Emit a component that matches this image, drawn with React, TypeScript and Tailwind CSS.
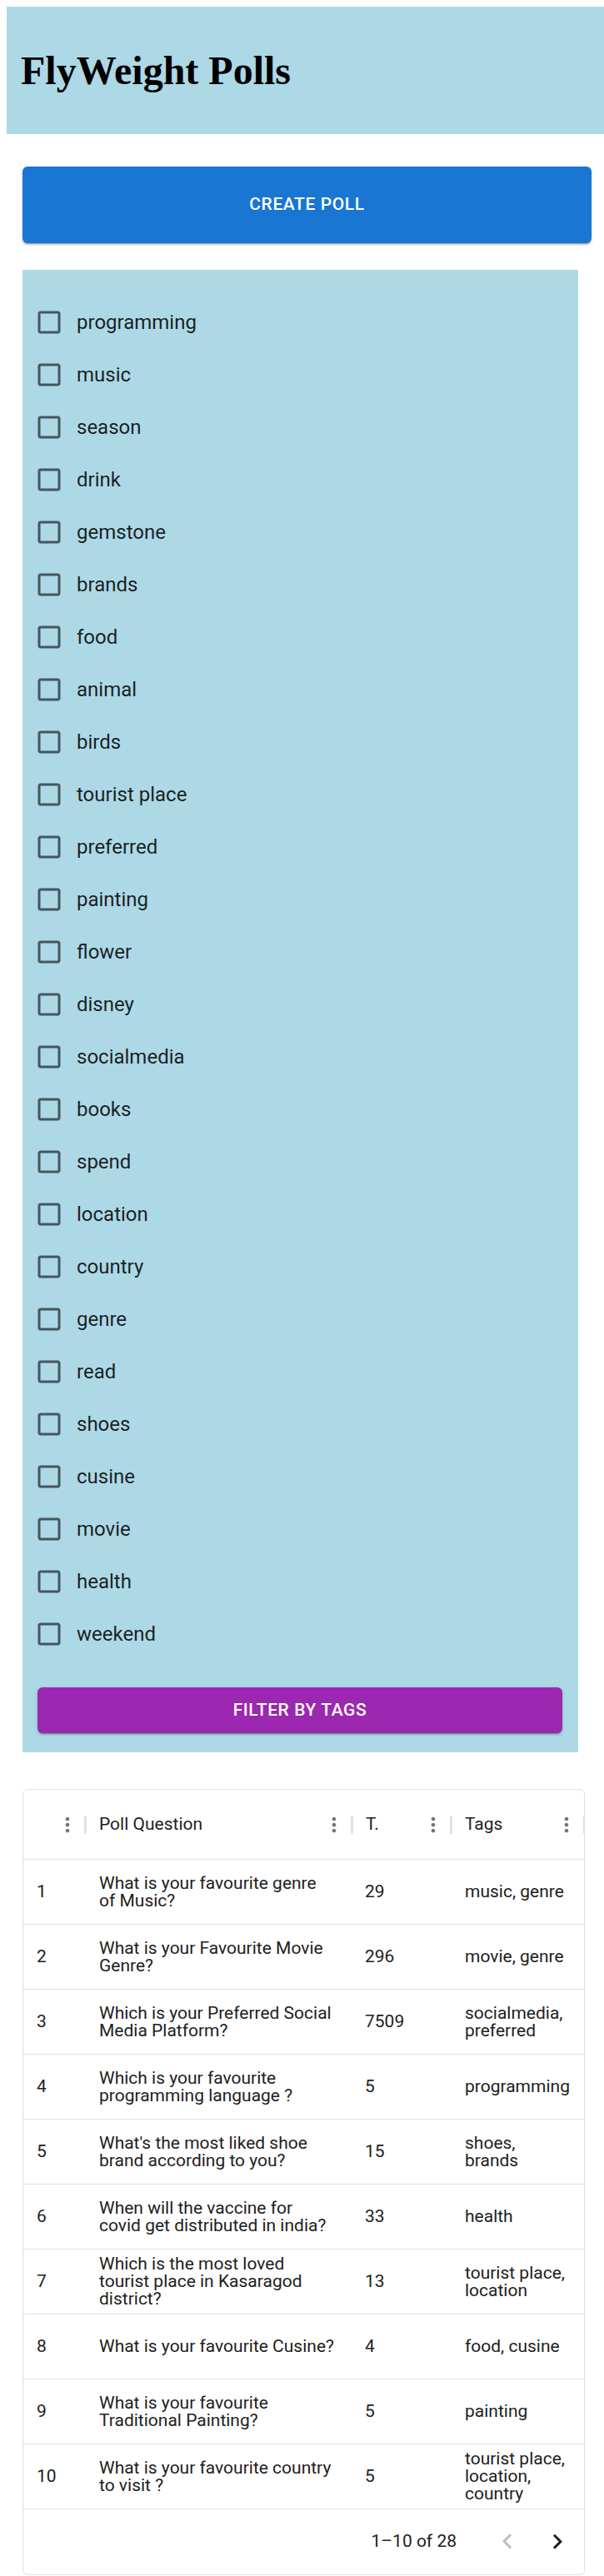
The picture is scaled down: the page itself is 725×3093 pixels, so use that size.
import React from 'react';

const tags = [
  'programming', 'music', 'season', 'drink', 'gemstone', 'brands', 'food', 'animal', 'birds',
  'tourist place', 'preferred', 'painting', 'flower', 'disney', 'socialmedia', 'books', 'spend',
  'location', 'country', 'genre', 'read', 'shoes', 'cusine', 'movie', 'health', 'weekend',
];

const polls = [
  { id: 1, q: 'What is your favourite genre of\u00a0Music?', t: 29, tags: 'music, genre' },
  { id: 2, q: 'What is your Favourite Movie Genre?', t: 296, tags: 'movie, genre' },
  { id: 3, q: 'Which is your Preferred Social Media Platform?', t: 7509, tags: 'socialmedia, preferred' },
  { id: 4, q: 'Which is your favourite programming language ?', t: 5, tags: 'programming' },
  { id: 5, q: "What's the most liked shoe brand according to you?", t: 15, tags: 'shoes, brands' },
  { id: 6, q: 'When will the vaccine for covid get distributed in india?', t: 33, tags: 'health' },
  { id: 7, q: 'Which is the most loved tourist place in Kasaragod district?', t: 13, tags: 'tourist place, location' },
  { id: 8, q: 'What is your favourite Cusine?', t: 4, tags: 'food, cusine' },
  { id: 9, q: 'What is your favourite Traditional Painting?', t: 5, tags: 'painting' },
  { id: 10, q: 'What is your favourite country to visit ?', t: 5, tags: 'tourist place, location, country' },
];

const MoreVert = () => (
  <svg viewBox="0 0 24 24" className="w-[28px] h-[28px] shrink-0 fill-[#757575]">
    <path d="M12 8c1.1 0 2-.9 2-2s-.9-2-2-2-2 .9-2 2 .9 2 2 2zm0 2c-1.1 0-2 .9-2 2s.9 2 2 2 2-.9 2-2-.9-2-2-2zm0 6c-1.1 0-2 .9-2 2s.9 2 2 2 2-.9 2-2-.9-2-2-2z" />
  </svg>
);

// column header: title, menu dots, then the resize separator on the column edge
const HeaderCell = ({ title, width }: { title: string; width: string }) => (
  <div className={`${width} h-full flex items-center shrink-0`}>
    <div className="flex-1 pl-[16px] truncate">{title}</div>
    <MoreVert />
    <div className="ml-[6px] mr-[-1px] w-[3px] h-[22px] bg-[#e0e0e0] rounded-sm shrink-0" />
  </div>
);

export default function App() {
  return (
    <div className="bg-white text-[#212121]" style={{ fontFamily: 'Roboto, "Noto Sans", sans-serif' }}>
      <header className="ml-2 mt-2 h-[153px] bg-[#add8e6] flex items-center pl-[17px]">
        <h1 className="text-[48px] font-bold text-black" style={{ fontFamily: '"Liberation Serif", "Times New Roman", serif' }}>
          FlyWeight Polls
        </h1>
      </header>

      <div className="ml-[27px]">
        <button className="mt-[39px] w-[683px] h-[92px] rounded-[6px] bg-[#1976d2] text-white text-[21px] font-medium uppercase tracking-[0.6px] shadow-[0_3px_1px_-2px_rgba(0,0,0,0.2),0_2px_2px_0_rgba(0,0,0,0.14),0_1px_5px_0_rgba(0,0,0,0.12)]">
          Create Poll
        </button>

        <section className="mt-[32px] w-[667px] bg-[#add8e6] pt-[31px] pb-[23px]">
          {tags.map(tag => (
            <label key={tag} className="h-[63px] flex items-center pl-[14px]">
              <svg viewBox="0 0 24 24" className="w-[36px] h-[36px] fill-[rgba(0,0,0,0.6)]">
                <path d="M19 5v14H5V5h14m0-2H5c-1.11 0-2 .9-2 2v14c0 1.1.89 2 2 2h14c1.1 0 2-.9 2-2V5c0-1.1-.9-2-2-2z" />
              </svg>
              <span className="ml-[15px] text-[24px] text-[rgba(0,0,0,0.87)]">{tag}</span>
            </label>
          ))}
          <div className="mt-[33px] pl-[18px] pr-[19px]">
            <button className="w-full h-[55px] rounded-[6px] bg-[#9c27b0] text-white text-[21px] font-medium uppercase tracking-[0.6px] shadow-[0_3px_1px_-2px_rgba(0,0,0,0.2),0_2px_2px_0_rgba(0,0,0,0.14),0_1px_5px_0_rgba(0,0,0,0.12)]">
              Filter by tags
            </button>
          </div>
        </section>

        <div className="mt-[44px] w-[675px] border border-[#e0e0e0] rounded-[6px] overflow-hidden text-[21px]">
          <div className="h-[84px] flex border-b border-[#e0e0e0] overflow-hidden">
            <HeaderCell title="" width="w-[75px]" />
            <HeaderCell title="Poll Question" width="w-[320px]" />
            <HeaderCell title="T." width="w-[119px]" />
            <HeaderCell title="Tags" width="w-[160px]" />
          </div>

          {polls.map(p => (
            <div key={p.id} className="h-[78px] flex border-b border-[#e0e0e0] leading-[21px]">
              <div className="w-[75px] shrink-0 flex items-center pl-[16px]">{p.id}</div>
              <div className="w-[320px] shrink-0 flex items-center pl-[16px] pr-[17px]">{p.q}</div>
              <div className="w-[119px] shrink-0 flex items-center px-[15px]">{p.t}</div>
              <div className="w-[160px] shrink-0 flex items-center pl-[16px] pr-[17px]">{p.tags}</div>
            </div>
          ))}

          <div className="h-[78px] flex items-center justify-end pr-[2px]">
            <span>1–10 of 28</span>
            <div className="ml-[31px] flex">
              <div className="w-[60px] h-[60px] flex items-center justify-center">
                <svg viewBox="0 0 24 24" className="w-[36px] h-[36px] fill-[#bdbdbd]">
                  <path d="M15.41 16.09l-4.58-4.59 4.58-4.59L14 5.5l-6 6 6 6z" />
                </svg>
              </div>
              <div className="w-[60px] h-[60px] flex items-center justify-center">
                <svg viewBox="0 0 24 24" className="w-[36px] h-[36px] fill-[#212121]">
                  <path d="M8.59 16.34l4.58-4.59-4.58-4.59L10 5.75l6 6-6 6z" />
                </svg>
              </div>
            </div>
          </div>
        </div>
      </div>
    </div>
  );
}
